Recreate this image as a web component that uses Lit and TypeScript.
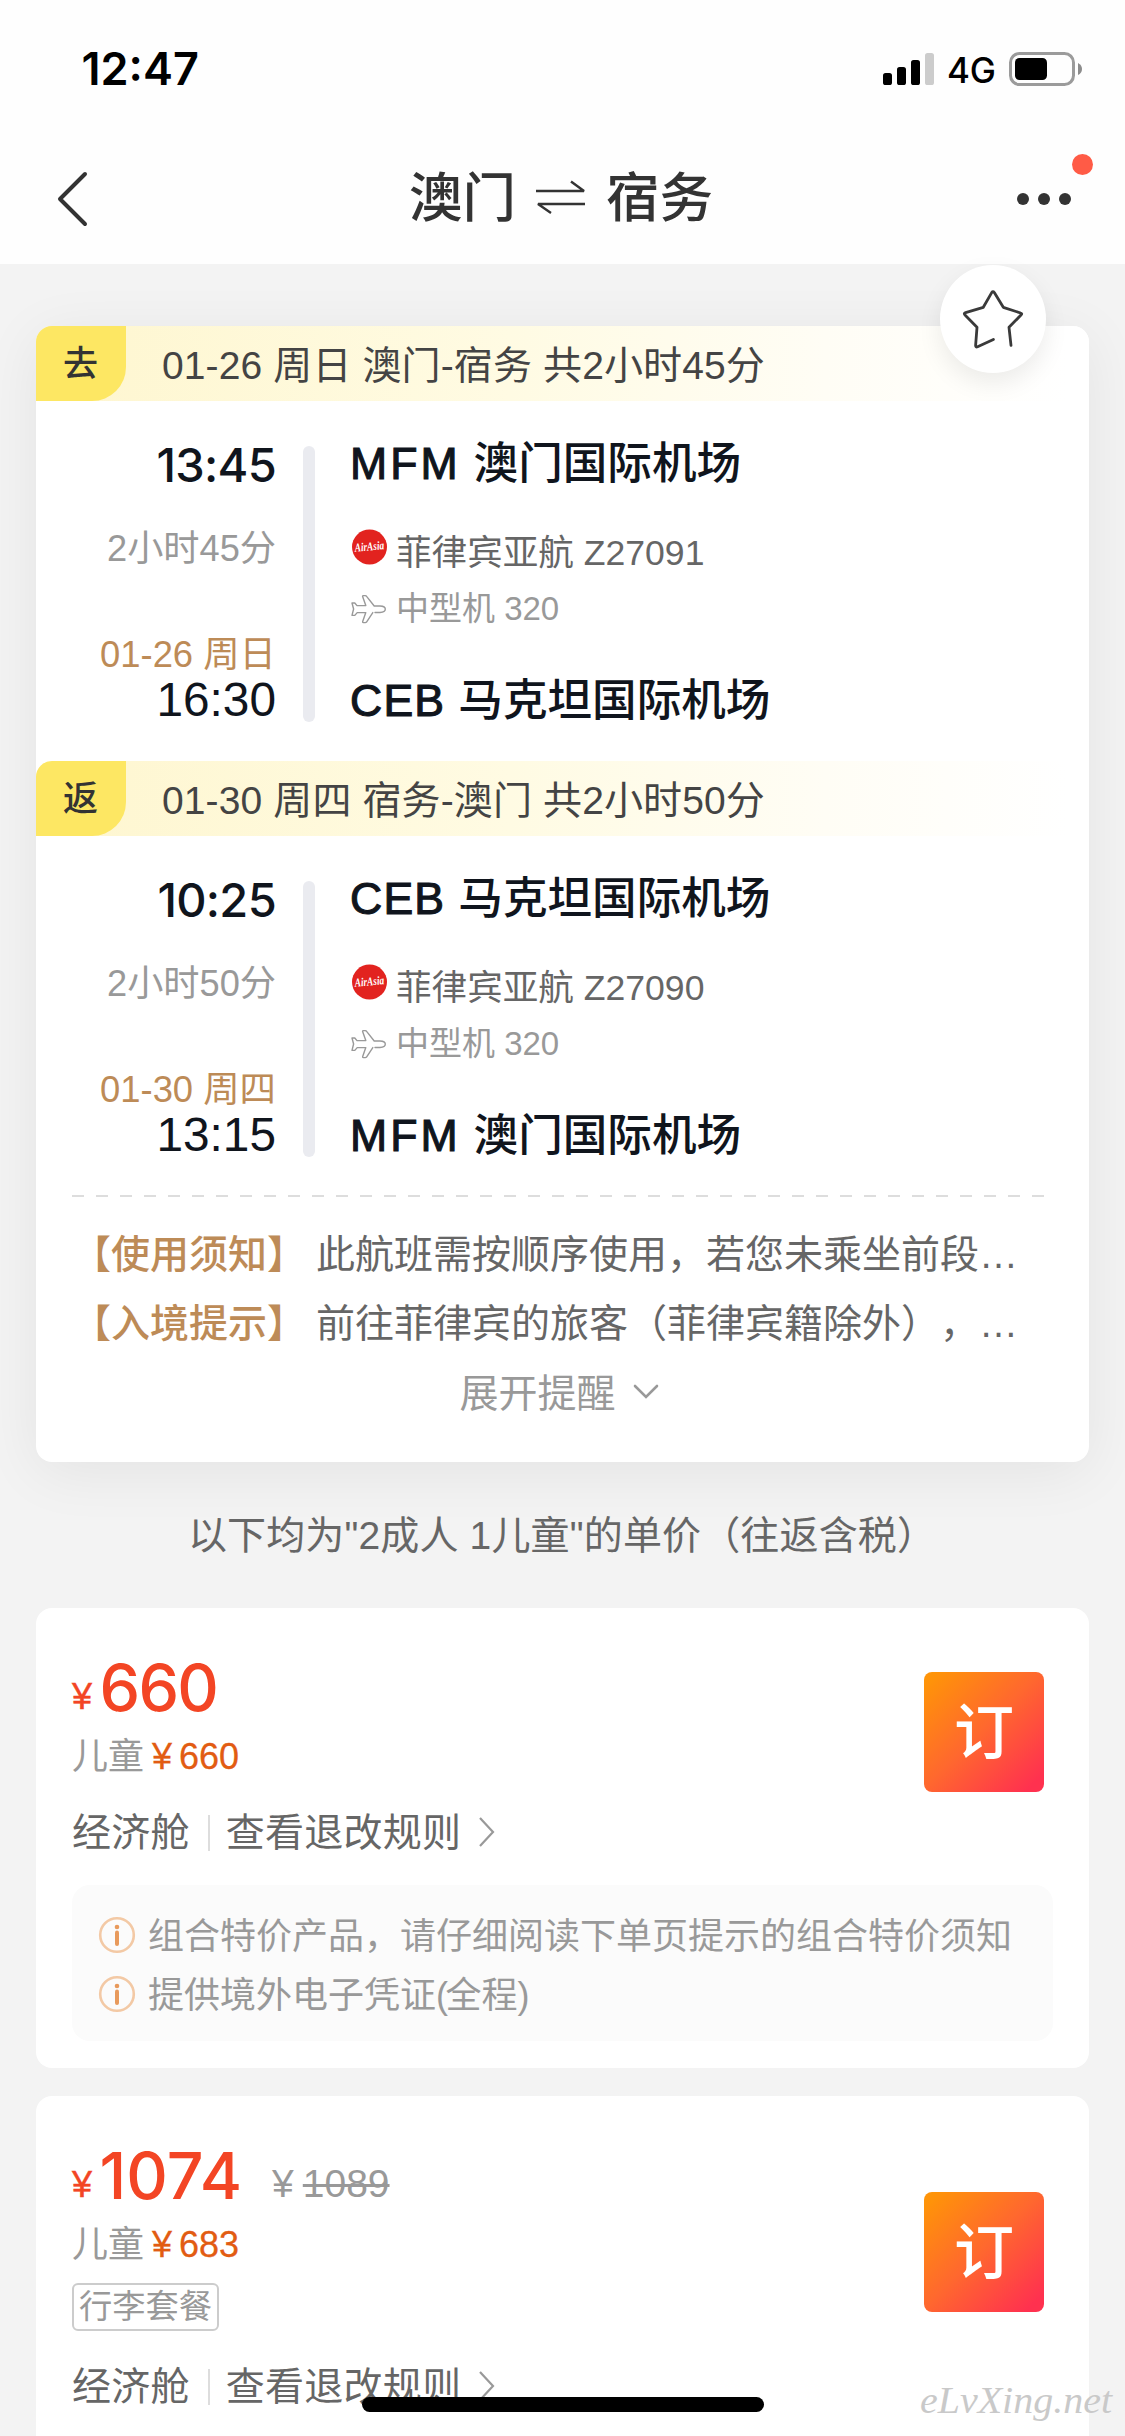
import { LitElement, html, css, svg, nothing } from "lit";
import { customElement, property } from "lit/decorators.js";

interface Segment {
  tag: string;
  summary: string;
  depart: string;
  duration: string;
  arriveDate: string;
  arrive: string;
  fromCode: string;
  fromName: string;
  toCode: string;
  toName: string;
  flight: string;
  plane: string;
}

interface Offer {
  price: string;
  oldPrice?: string;
  child: string;
  badge?: string;
  notes: string[];
}

const segments: Segment[] = [
  {
    tag: "去",
    summary: "01-26 周日 澳门-宿务 共2小时45分",
    depart: "13:45",
    duration: "2小时45分",
    arriveDate: "01-26 周日",
    arrive: "16:30",
    fromCode: "MFM",
    fromName: "澳门国际机场",
    toCode: "CEB",
    toName: "马克坦国际机场",
    flight: "菲律宾亚航 Z27091",
    plane: "中型机 320",
  },
  {
    tag: "返",
    summary: "01-30 周四 宿务-澳门 共2小时50分",
    depart: "10:25",
    duration: "2小时50分",
    arriveDate: "01-30 周四",
    arrive: "13:15",
    fromCode: "CEB",
    fromName: "马克坦国际机场",
    toCode: "MFM",
    toName: "澳门国际机场",
    flight: "菲律宾亚航 Z27090",
    plane: "中型机 320",
  },
];

const offers: Offer[] = [
  {
    price: "660",
    child: "660",
    notes: ["组合特价产品，请仔细阅读下单页提示的组合特价须知", "提供境外电子凭证(全程)"],
  },
  { price: "1074", oldPrice: "1089", child: "683", badge: "行李套餐", notes: [] },
];

const base = css`
  :host {
    display: block;
    font-family: "Liberation Sans", "Noto Sans CJK SC", sans-serif;
    text-spacing-trim: space-all;
    white-space: nowrap;
  }
  * {
    box-sizing: border-box;
  }
  svg {
    display: block;
    flex: none;
    overflow: visible;
  }
`;

@customElement("status-bar")
export class StatusBar extends LitElement {
  static styles = [
    base,
    css`
      .bar {
        height: 132px;
        padding: 0 43px 0 81.5px;
        display: flex;
        justify-content: space-between;
        font-family: Inter, sans-serif;
        color: #000;
      }
      .time {
        font-size: 45px;
        font-weight: 600;
        line-height: 138px;
      }
      .right {
        display: flex;
        height: 138px;
        align-items: center;
      }
      .net {
        font-size: 35px;
        font-weight: 500;
        width: 48px;
        letter-spacing: -0.3px;
        margin: 2px 14px 0 13px;
      }
    `,
  ];
  render() {
    return html`<div class="bar">
      <div class="time">12:47</div>
      <div class="right">
        <svg width="51" height="32" viewBox="0 0 51 32">
          <rect x="0" y="20" width="9" height="12" rx="2.6" />
          <rect x="14" y="14" width="9" height="18" rx="2.6" />
          <rect x="28" y="7" width="9" height="25" rx="2.6" />
          <rect x="42" y="0" width="9" height="32" rx="2.6" fill="#ccc" />
        </svg>
        <div class="net">4G</div>
        <svg width="73" height="34" viewBox="0 0 73 34">
          <rect x="1.5" y="1.5" width="63" height="31" rx="9" fill="none" stroke="#9b9b9b" stroke-width="3" />
          <rect x="6" y="6" width="32" height="22" rx="4.5" />
          <path d="M69 11 Q73 13 73 17 Q73 21 69 23Z" fill="#8c8c8c" />
        </svg>
      </div>
    </div>`;
  }
}

@customElement("nav-bar")
export class NavBar extends LitElement {
  static styles = [
    base,
    css`
      .nav {
        height: 132px;
        padding: 0 43px 0 56px;
        display: grid;
        grid-template-columns: 90px 1fr 90px;
        align-items: center;
        color: #333;
      }
      .title {
        display: flex;
        justify-content: center;
        align-items: center;
        gap: 20px;
        font-size: 53.5px;
        font-weight: 500;
        line-height: 132px;
        padding: 1px 16px 0 0;
      }
      .more {
        position: relative;
        justify-self: end;
        width: 65px;
      }
      .alert {
        position: absolute;
        right: -11px;
        top: -38px;
        width: 21px;
        height: 21px;
        border-radius: 50%;
        background: #ff5b46;
      }
    `,
  ];
  render() {
    return html`<div class="nav">
      <svg width="34" height="56" viewBox="0 0 34 56">
        <path d="M29 3 L4 28 L29 53" fill="none" stroke="#333" stroke-width="4" stroke-linecap="round" stroke-linejoin="round" />
      </svg>
      <div class="title">
        <span>澳门</span>
        <svg width="50" height="34" viewBox="0 0 50 34">
          <path d="M0 9 H48 L35 -0.5 M49 22 H2 L15 31" fill="none" stroke="#333" stroke-width="2.4" stroke-linejoin="bevel" />
        </svg>
        <span>宿务</span>
      </div>
      <div class="more">
        <svg width="56" height="14" viewBox="0 0 56 14">
          <circle cx="6" cy="7" r="6" fill="#333" />
          <circle cx="27" cy="7" r="6" fill="#333" />
          <circle cx="48" cy="7" r="6" fill="#333" />
        </svg>
        <div class="alert"></div>
      </div>
    </div>`;
  }
}

@customElement("flight-segment")
export class FlightSegment extends LitElement {
  @property({ attribute: false }) data!: Segment;
  static styles = [
    base,
    css`
      .banner {
        display: flex;
        height: 75px;
        background: linear-gradient(90deg, #fef6cf, #fffbe3 45%, #fffdf5 75%, #fff 98%);
        border-radius: 16px 16px 0 0;
      }
      .tag {
        width: 90px;
        height: 75px;
        padding-right: 1px;
        border-radius: 16px 0 34px 0;
        background: #fde763;
        color: #333;
        font-size: 35px;
        font-weight: 500;
        line-height: 75px;
        text-align: center;
      }
      .summary {
        margin-left: 36px;
        font-size: 39px;
        letter-spacing: 0.12px;
        line-height: 79px;
        color: #444;
      }
      .body {
        display: flex;
        height: 360px;
        padding-top: 32px;
      }
      .times {
        width: 240px;
        text-align: right;
        padding-top: 2px;
      }
      .dep {
        font: 500 47px/60px Inter, sans-serif;
        letter-spacing: -0.7px;
        color: #10151d;
      }
      .dur {
        margin-top: 31px;
        font-size: 36.2px;
        line-height: 45px;
        color: #999;
      }
      .date {
        margin-top: 62px;
        font-size: 36.4px;
        line-height: 44px;
        color: #bd8b57;
      }
      .arr {
        font-size: 47.8px;
        line-height: 46px;
        color: #10151d;
      }
      .line {
        width: 12px;
        height: 276px;
        margin: 13px 35px 0 27px;
        border-radius: 6px;
        background: #eaebf0;
      }
      .port {
        display: flex;
        gap: 13px;
        height: 60px;
        font-size: 44.6px;
        font-weight: 500;
        line-height: 62px;
        color: #10151d;
      }
      .code {
        font-weight: 400;
        letter-spacing: 1.2px;
        -webkit-text-stroke: 1.1px #10151d;
      }
      .code.wide {
        letter-spacing: 3px;
      }
      .row {
        display: flex;
        height: 40px;
        line-height: 42px;
      }
      .airline {
        margin-top: 39px;
        gap: 9px;
        font-size: 35.6px;
        color: #666;
        padding-left: 2px;
      }
      .airline svg {
        margin-top: -3px;
      }
      .plane {
        margin-top: 16px;
        gap: 10px;
        font-size: 33px;
        color: #999;
        padding-left: 1px;
      }
      .plane svg {
        margin-top: 6px;
      }
      .dest {
        margin-top: 42px;
      }
    `,
  ];
  private code(c: string) {
    return html`<span class="code ${c.includes("M") ? "wide" : ""}">${c}</span>`;
  }
  render() {
    const d = this.data;
    return html`
      <div class="banner">
        <div class="tag">${d.tag}</div>
        <div class="summary">${d.summary}</div>
      </div>
      <div class="body">
        <div class="times">
          <div class="dep">${d.depart}</div>
          <div class="dur">${d.duration}</div>
          <div class="date">${d.arriveDate}</div>
          <div class="arr">${d.arrive}</div>
        </div>
        <div class="line"></div>
        <div>
          <div class="port">${this.code(d.fromCode)}<span>${d.fromName}</span></div>
          <div class="row airline">
            <svg width="35" height="36" viewBox="0 0 35 36">
              <circle cx="17.5" cy="18" r="17.5" fill="#e2231f" />
              <text x="2.6" y="21.5" transform="rotate(-5 17 18)" textLength="29.5" lengthAdjust="spacingAndGlyphs"
                font-family="Liberation Serif, serif" font-style="italic" font-weight="700" font-size="12" fill="#fff">AirAsia</text>
            </svg>
            <span>${d.flight}</span>
          </div>
          <div class="row plane">
            <svg width="35" height="30" viewBox="0 0 35 30">
              <path d="M24 18.5 H29 Q34.3 18.2 34.3 15 Q34.3 12.3 29 12 H23.2 L15.6 2.4 Q15.2 1.6 14.2 1.6 H12.3 Q11.3 1.6 11.7 2.8 L14.8 11.6 H6 L3.8 9 H1 L2.6 15 L1 21.4 H3.8 L6.2 18.6 H14.8 L11.7 27.4 Q11.3 28.6 12.3 28.6 H14.2 Q15.2 28.6 15.7 27.8 L21.8 18.6"
                fill="none" stroke="#999" stroke-width="1.4" stroke-linejoin="round" stroke-linecap="round" />
            </svg>
            <span>${d.plane}</span>
          </div>
          <div class="port dest">${this.code(d.toCode)}<span>${d.toName}</span></div>
        </div>
      </div>
    `;
  }
}

@customElement("fare-offer")
export class FareOffer extends LitElement {
  @property({ attribute: false }) data!: Offer;
  static styles = [
    base,
    css`
      .card {
        background: #fff;
        border-radius: 16px;
        min-height: 460px;
        padding: 44px 36px 27px;
      }
      .head {
        display: flex;
        justify-content: space-between;
      }
      .price {
        display: flex;
        align-items: baseline;
        height: 70px;
        line-height: 72px;
        color: #f34524;
      }
      .sign {
        font-size: 36px;
        transform: translateY(-2px);
        width: 27.5px;
        -webkit-text-stroke: 0.5px #f34524;
      }
      .amount {
        font-family: Inter, sans-serif;
        font-weight: 500;
        font-size: 64.5px;
        letter-spacing: -1.7px;
      }
      .amount.long {
        letter-spacing: 0;
      }
      .old {
        display: flex;
        gap: 9px;
        margin-left: 30px;
        font-size: 39px;
        color: #999;
        transform: translateY(-2px);
      }
      .struck {
        text-decoration: line-through;
        text-decoration-thickness: 2.5px;
      }
      .child {
        display: flex;
        margin-top: 14px;
        height: 39px;
        line-height: 41px;
        font-size: 36px;
        color: #999;
      }
      .child .cost {
        display: flex;
        gap: 7px;
        margin-left: 8px;
        color: #e25c12;
        -webkit-text-stroke: 0.3px #e25c12;
      }
      .badge {
        display: flex;
        width: 147px;
        height: 48px;
        margin-top: 20px;
        justify-content: center;
        border: 2px solid #ccc;
        border-radius: 6px;
        font-size: 33.3px;
        line-height: 44px;
        color: #999;
      }
      .rules {
        display: flex;
        align-items: center;
        margin-top: 38px;
        height: 39px;
        line-height: 39px;
        font-size: 39px;
        letter-spacing: 0.25px;
        color: #666;
      }
      .badge + .rules {
        margin-top: 36px;
      }
      .sep {
        width: 2px;
        height: 36px;
        margin: 0 16px 0 18px;
        background: #ddd;
      }
      .rules svg {
        margin: -2px 0 0 17px;
      }
      .book {
        width: 120px;
        height: 120px;
        margin: 20px 9px 0 0;
        border-radius: 8px;
        background: linear-gradient(135deg, #ff9408 5%, #ff682e 48%, #ff314f 92%);
        color: #fff;
        font-size: 60px;
        font-weight: 500;
        line-height: 124px;
        text-align: center;
      }
      .book.low {
        margin-top: 52px;
      }
      .notes {
        margin-top: 33px;
        padding: 22px 26px 16px;
        border-radius: 18px;
        background: #fbfbfb;
      }
      .note {
        display: flex;
        align-items: center;
        gap: 12px;
        height: 59px;
        line-height: 59px;
        font-size: 36px;
        color: #999;
      }
      .note svg {
        margin-top: -3px;
      }
      .paren {
        letter-spacing: -2.5px;
      }
    `,
  ];
  private note(text: string) {
    return text.split(/([()])/).map((t) => (t === "(" || t === ")" ? html`<span class="paren">${t}</span>` : t));
  }
  render() {
    const o = this.data;
    return html`<div class="card">
      <div class="head">
        <div>
          <div class="price">
            <span class="sign">¥</span><span class="amount ${o.price.length > 3 ? "long" : ""}">${o.price}</span>
            ${o.oldPrice ? html`<span class="old"><span>¥</span><span class="struck">${o.oldPrice}</span></span>` : nothing}
          </div>
          <div class="child">
            <span>儿童</span>
            <span class="cost"><span>¥</span><span>${o.child}</span></span>
          </div>
          ${o.badge ? html`<div class="badge">${o.badge}</div>` : nothing}
          <div class="rules">
            <span>经济舱</span>
            <span class="sep"></span>
            <span>查看退改规则</span>
            <svg width="17" height="32" viewBox="0 0 17 32">
              <path d="M2 2 L15 16 L2 30" fill="none" stroke="#999" stroke-width="2.2" />
            </svg>
          </div>
        </div>
        <div class="book ${o.badge ? "low" : ""}">订</div>
      </div>
      ${o.notes.length
        ? html`<div class="notes">
            ${o.notes.map(
              (n) => html`<div class="note">
                <svg width="38" height="38" viewBox="0 0 38 38">
                  <circle cx="19" cy="19" r="16.8" fill="none" stroke="#f3c9a5" stroke-width="2.6" />
                  <circle cx="19" cy="11" r="2.3" fill="#e89a5c" />
                  <path d="M19 16.5 V28" stroke="#e89a5c" stroke-width="4" stroke-linecap="round" />
                </svg>
                <span>${this.note(n)}</span>
              </div>`,
            )}
          </div>`
        : nothing}
    </div>`;
  }
}

const star = svg`<path d="M71 80.3 L69 62.3 L81 50 Q82.6 48.6 80.6 48 L63.3 42.3 L54.3 27.6 Q53 25.8 51.7 27.6 L43.3 42.3 L25.6 47.6 Q23.4 48.4 25 50 L37 62.3 L35.6 80.6 Q35.6 82.6 37.6 81.8 L53.4 74.4"
  fill="none" stroke="#3a3a3a" stroke-width="2.8" stroke-linecap="round" stroke-linejoin="round" />`;

@customElement("app-root")
export class AppRoot extends LitElement {
  static styles = [
    base,
    css`
      .page {
        position: relative;
        width: 1125px;
        height: 2436px;
        overflow: hidden;
        background: #f3f3f3;
      }
      .top {
        background: #fefefe;
      }
      .content {
        padding: 62px 36px 0;
      }
      .trip {
        position: relative;
        height: 1136px;
        background: #fff;
        border-radius: 16px;
        box-shadow: 0 10px 60px rgba(0, 0, 0, 0.065);
      }
      .fav {
        position: absolute;
        right: 43px;
        top: -61px;
        width: 106px;
        height: 108px;
        border-radius: 50%;
        background: #fff;
        box-shadow: 0 10px 24px rgba(0, 0, 0, 0.08);
      }
      .dash {
        height: 2px;
        margin: -1px 45px 0 36px;
        background: repeating-linear-gradient(90deg, #ddd 0 12px, transparent 12px 24px);
      }
      .tips {
        padding: 23px 0 0 36px;
        font-size: 39px;
        line-height: 69px;
        color: #666;
      }
      .tip {
        display: flex;
        gap: 10px;
      }
      .label {
        font-weight: 500;
        color: #bd8b57;
      }
      .expand {
        display: flex;
        justify-content: center;
        align-items: center;
        gap: 17px;
        height: 70px;
        padding-right: 7px;
        font-size: 39px;
        line-height: 71px;
        color: #999;
      }
      .expand svg {
        margin-top: -2px;
      }
      .caption {
        height: 146px;
        line-height: 147px;
        padding-right: 1px;
        text-align: center;
        font-size: 39px;
        letter-spacing: 0.15px;
        color: #666;
      }
      .offers {
        display: flex;
        flex-direction: column;
        gap: 28px;
      }
      .home {
        position: absolute;
        left: 362px;
        top: 2397px;
        width: 402px;
        height: 15px;
        border-radius: 8px;
        background: #000;
      }
      .mark {
        position: absolute;
        left: 918px;
        top: 2374px;
      }
    `,
  ];
  render() {
    return html`<div class="page">
      <div class="top">
        <status-bar></status-bar>
        <nav-bar></nav-bar>
      </div>
      <div class="content">
        <div class="trip">
          ${segments.map((s) => html`<flight-segment .data=${s}></flight-segment>`)}
          <div class="dash"></div>
          <div class="tips">
            <div class="tip"><span class="label">【使用须知】</span><span>此航班需按顺序使用，若您未乘坐前段…</span></div>
            <div class="tip"><span class="label">【入境提示】</span><span>前往菲律宾的旅客（菲律宾籍除外），…</span></div>
          </div>
          <div class="expand">
            <span>展开提醒</span>
            <svg width="26" height="16" viewBox="0 0 26 16">
              <path d="M2 2 L13 13 L24 2" fill="none" stroke="#999" stroke-width="2.6" stroke-linecap="round" />
            </svg>
          </div>
          <div class="fav"><svg width="106" height="108" viewBox="0 0 106 108">${star}</svg></div>
        </div>
        <div class="caption">以下均为"2成人 1儿童"的单价（往返含税）</div>
        <div class="offers">${offers.map((o) => html`<fare-offer .data=${o}></fare-offer>`)}</div>
      </div>
      <div class="home"></div>
      <svg class="mark" width="204" height="56" viewBox="0 0 204 56">
        <text x="2" y="39" textLength="192" lengthAdjust="spacingAndGlyphs" font-family="Liberation Serif, serif"
          font-style="italic" font-size="38" fill="#c9c9c9">eLvXing.net</text>
      </svg>
    </div>`;
  }
}
